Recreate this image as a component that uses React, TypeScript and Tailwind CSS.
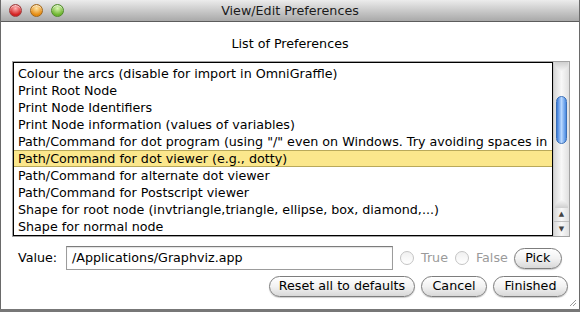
import React from "react";

const rows = [
  "Colour the arcs (disable for import in OmniGraffle)",
  "Print Root Node",
  "Print Node Identifiers",
  "Print Node information (values of variables)",
  'Path/Command for dot program (using "/" even on Windows. Try avoiding spaces in',
  "Path/Command for dot viewer (e.g., dotty)",
  "Path/Command for alternate dot viewer",
  "Path/Command for Postscript viewer",
  "Shape for root node (invtriangle,triangle, ellipse, box, diamond,...)",
  "Shape for normal node",
];

function Light({ from, to, ring }: { from: string; to: string; ring: string }) {
  return (
    <span
      className="w-[13px] h-[13px] rounded-full border shadow-[inset_0_1px_1px_rgba(255,255,255,0.7)]"
      style={{ background: `radial-gradient(circle at 50% 30%, ${from}, ${to} 70%)`, borderColor: ring }}
    />
  );
}

function AquaButton({ children, w }: { children: React.ReactNode; w: string }) {
  return (
    <button
      className={`${w} h-[21px] rounded-full border border-[#7d7d7d] bg-gradient-to-b from-white via-[#f2f2f2] to-[#d8d8d8] text-[12.7px] leading-none text-black shadow-[0_1px_1px_rgba(0,0,0,0.2)] flex items-center justify-center`}
    >
      {children}
    </button>
  );
}

function Radio() {
  return (
    <span className="w-[14px] h-[14px] rounded-full border border-[#c4c4c4] bg-gradient-to-b from-[#f0f0f0] to-white" />
  );
}

export default function App() {
  return (
    <div className="w-[580px] h-[312px] bg-[#777] overflow-hidden" style={{ fontFamily: '"DejaVu Sans", sans-serif' }}>
      <div className="w-[580px] h-[309px] bg-white border-l border-r border-[#6a6a6a] flex flex-col">
        {/* title bar */}
        <div className="h-[22px] shrink-0 bg-gradient-to-b from-[#ececec] to-[#a9a9a9] border-b border-[#5c5c5c] flex items-center relative">
          <div className="flex items-center gap-[8px] pl-[8px]">
            <Light from="#ffb4b4" to="#d21f1f" ring="#9c3a3a" />
            <Light from="#ffe6a8" to="#e58a0f" ring="#a0661a" />
            <Light from="#dcf7b5" to="#6cb42e" ring="#4f8a2a" />
          </div>
          <div className="absolute inset-0 flex items-center justify-center text-[12.7px] text-[#1a1a1a]">
            View/Edit Preferences
          </div>
        </div>

        <div className="text-center text-[12.7px] leading-[16px] mt-[14px] text-black">List of Preferences</div>

        {/* list box */}
        <div className="mt-[9px] ml-[11px] w-[558px] h-[176px] border border-[#a3a3a3] flex">
          <div className="flex-1 border border-black pt-[2px] overflow-hidden">
            {rows.map((r, i) =>
              i === 5 ? (
                <div
                  key={i}
                  className="h-[17px] bg-[#fbe78c] border-y border-[#b9a95a] pl-[4px] text-[12.7px] leading-[15px] whitespace-nowrap text-black"
                >
                  {r}
                </div>
              ) : (
                <div key={i} className="h-[17px] pl-[4px] text-[12.7px] leading-[17px] whitespace-nowrap text-black">
                  {r}
                </div>
              )
            )}
          </div>
          {/* scrollbar */}
          <div className="w-[16px] bg-gradient-to-r from-[#d9d9d9] via-[#f8f8f8] to-[#e0e0e0] flex flex-col border-l border-[#c8c8c8]">
            <div className="h-[9px] mx-[1px] rounded-b-full bg-gradient-to-b from-[#cfcfcf] to-[#f4f4f4]" />
            <div className="h-[25px]" />
            <div className="mx-[2px] h-[48px] rounded-full border border-[#3a6fb8] bg-gradient-to-r from-[#3a7ad8] via-[#b8d8ff] to-[#4a8ae0]" />
            <div className="flex-1" />
            <div className="h-[8px] mx-[1px] rounded-t-full bg-gradient-to-t from-[#cfcfcf] to-[#f4f4f4]" />
            <div className="h-[14px] flex items-center justify-center text-[7px] text-[#444] border-b border-[#c0c0c0]">▲</div>
            <div className="h-[14px] flex items-center justify-center text-[7px] text-[#444]">▼</div>
          </div>
        </div>

        {/* value row */}
        <div className="flex items-center mt-[9px] h-[24px]">
          <span className="ml-[17px] w-[48px] text-[12.7px] text-black">Value:</span>
          <div className="w-[327px] h-[24px] border border-[#9c9c9c] border-t-[#7c7c7c] pl-[5px] flex items-center text-[12.7px] text-black shadow-[inset_0_1px_1px_rgba(0,0,0,0.12)]">
            /Applications/Graphviz.app
          </div>
          <div className="ml-[7px] flex items-center gap-[7px] text-[12.7px] text-[#9a9a9a]">
            <Radio />
            <span>True</span>
            <Radio />
            <span>False</span>
          </div>
          <div className="ml-[6px]">
            <AquaButton w="w-[48px]">Pick</AquaButton>
          </div>
        </div>

        {/* buttons */}
        <div className="flex justify-end gap-[6px] mt-[6px] pr-[11px]">
          <AquaButton w="w-[146px]">Reset all to defaults</AquaButton>
          <AquaButton w="w-[66px]">Cancel</AquaButton>
          <AquaButton w="w-[75px]">Finished</AquaButton>
        </div>
        <div className="flex-1 flex justify-end items-end pr-[2px] pb-[2px]">
          <svg width="9" height="9" viewBox="0 0 9 9">
            <path d="M8 2 L2 8 M8 5 L5 8" stroke="#9a9a9a" strokeWidth="1" />
          </svg>
        </div>
      </div>
    </div>
  );
}
